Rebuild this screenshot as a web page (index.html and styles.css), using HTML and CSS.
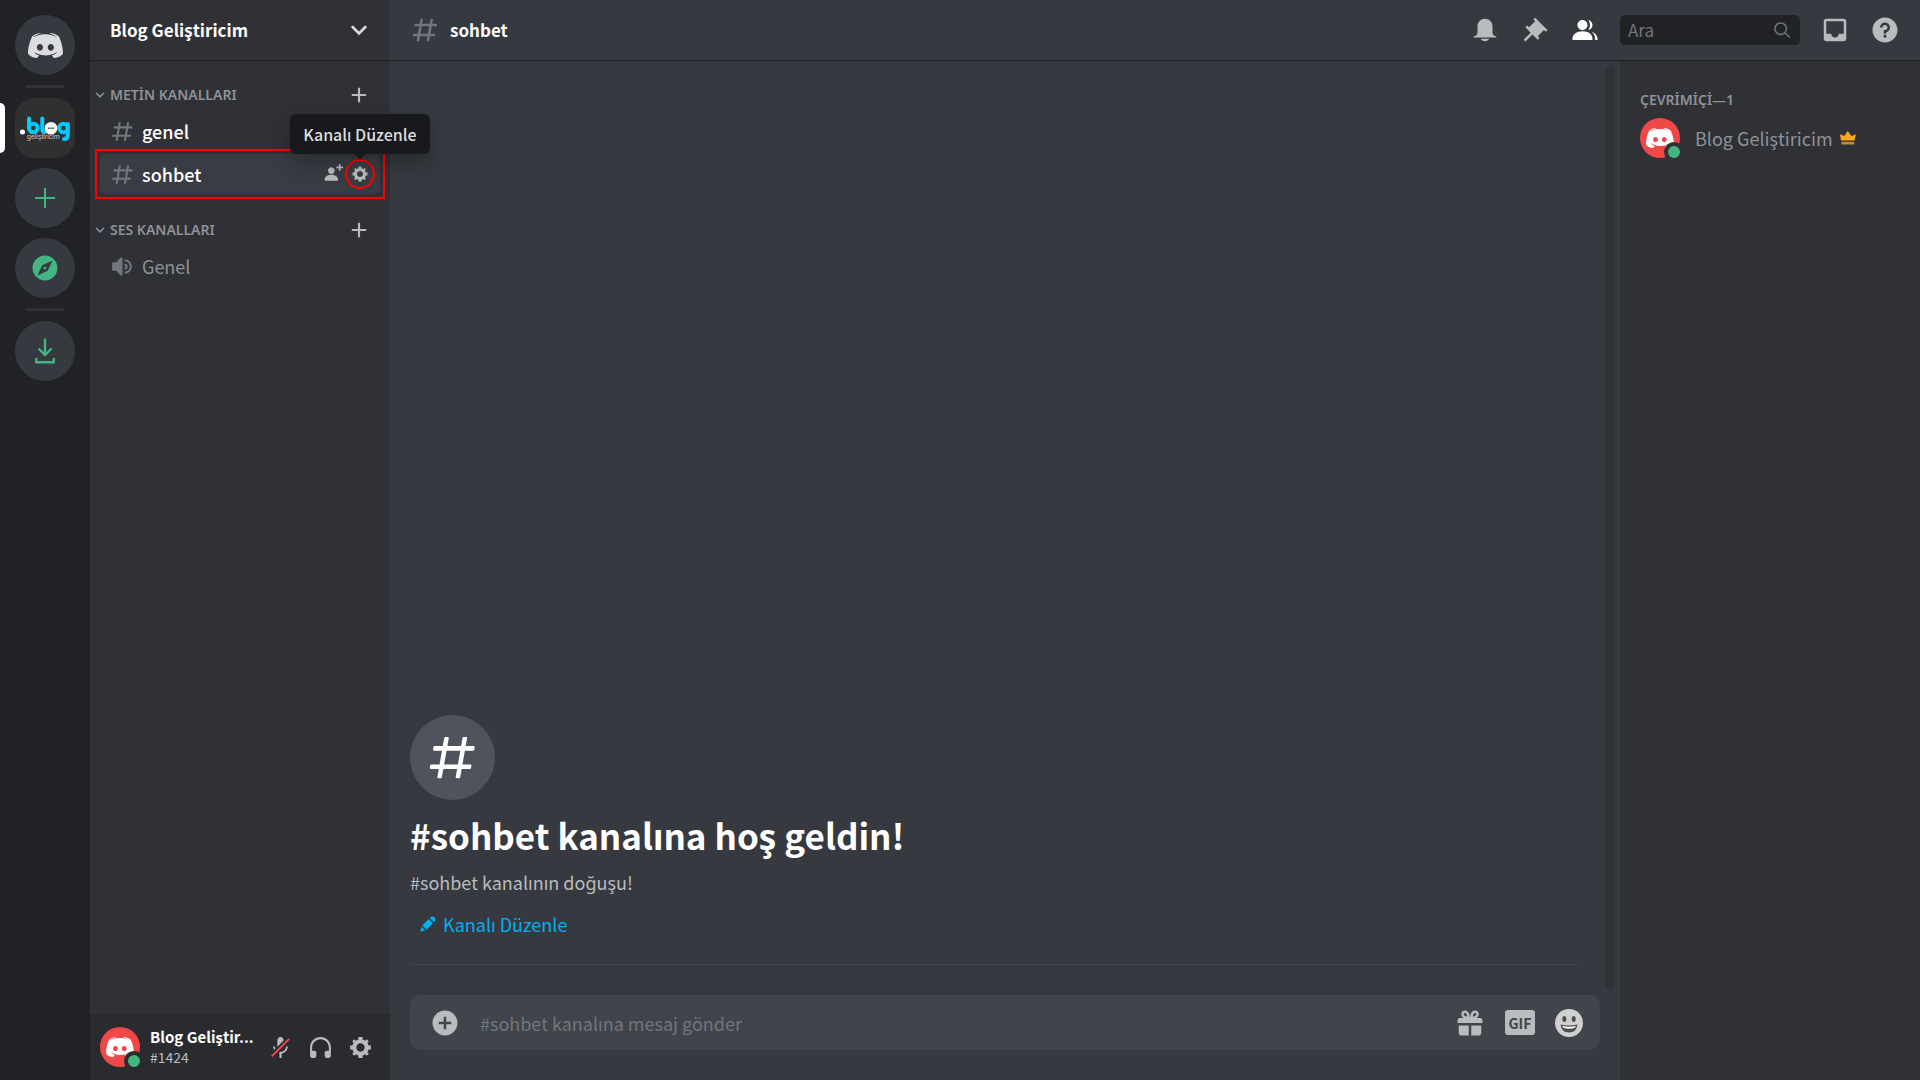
FILE: index.html
```html
<!DOCTYPE html>
<html lang="tr">
<head>
<meta charset="utf-8">
<meta name="viewport" content="width=device-width, initial-scale=1">
<title>sohbet</title>
<link rel="stylesheet" href="styles.css">
</head>
<body>
<svg class="sprite" aria-hidden="true">
  <symbol id="clyde" viewBox="0 0 28 20"><path fill-rule="evenodd" d="M20.6644 20C20.6644 20 19.8014 18.9762 19.0822 18.0714C22.2226 17.1905 23.4212 15.2381 23.4212 15.2381C22.4384 15.881 21.5034 16.3334 20.6644 16.6429C19.4658 17.1429 18.3151 17.4762 17.1884 17.6667C14.887 18.0953 12.7774 17.9762 10.9795 17.6429C9.613 17.381 8.4384 17 7.4555 16.6191C6.9041 16.4048 6.3048 16.1429 5.7055 15.8096C5.6336 15.7619 5.5616 15.7381 5.4897 15.6905C5.4418 15.6667 5.4178 15.6429 5.3938 15.6191C4.9623 15.381 4.7226 15.2143 4.7226 15.2143C4.7226 15.2143 5.8733 17.119 8.9178 18.0238C8.1986 18.9286 7.3116 20 7.3116 20C2.0137 19.8333 0 16.381 0 16.381C0 8.7144 3.4521 2.5002 3.4521 2.5002C6.9041 -.0712 10.1884 0 10.1884 0L10.4281 .2859C6.113 1.524 4.1233 3.405 4.1233 3.405C4.1233 3.405 4.6507 3.1193 5.5377 2.7145C8.1027 1.5955 10.1404 1.2859 10.9795 1.2145C11.1233 1.1907 11.2432 1.1669 11.387 1.1669C12.8493 .9764 14.5034 .9288 16.2295 1.1193C18.5068 1.3812 20.952 2.0479 23.4452 3.405C23.4452 3.405 21.5514 1.6193 17.476 .3812L17.8116 0C17.8116 0 21.0959 -.0712 24.5479 2.5002C24.5479 2.5002 28 8.7144 28 16.381C28 16.381 25.9623 19.8333 20.6644 20ZM9.5171 8.8812C8.1507 8.8812 7.0719 10.0717 7.0719 11.5241C7.0719 12.9765 8.1747 14.167 9.5171 14.167C10.8836 14.167 11.9623 12.9765 11.9623 11.5241C11.9863 10.0717 10.8836 8.8812 9.5171 8.8812ZM18.2671 8.8812C16.9007 8.8812 15.8219 10.0717 15.8219 11.5241C15.8219 12.9765 16.9247 14.167 18.2671 14.167C19.6336 14.167 20.7123 12.9765 20.7123 11.5241C20.7123 10.0717 19.6336 8.8812 18.2671 8.8812Z"/></symbol>
  <symbol id="gear" viewBox="0 0 24 24"><path fill-rule="evenodd" d="M19.738 10H22V14H19.739C19.498 14.931 19.1 15.798 18.565 16.564L20 18L18 20L16.565 18.564C15.797 19.099 14.932 19.498 14 19.738V22H10V19.738C9.069 19.498 8.203 19.099 7.436 18.564L6 20L4 18L5.436 16.564C4.901 15.799 4.502 14.932 4.262 14H2V10H4.262C4.502 9.068 4.9 8.202 5.436 7.436L4 6L6 4L7.436 5.436C8.202 4.9 9.068 4.502 10 4.262V2H14V4.261C14.932 4.502 15.797 4.9 16.565 5.435L18 3.999L20 5.999L18.564 7.436C19.099 8.202 19.498 9.069 19.738 10ZM12 16C14.2091 16 16 14.2091 16 12C16 9.79086 14.2091 8 12 8C9.79086 8 8 9.79086 8 12C8 14.2091 9.79086 16 12 16Z"/></symbol>
  <symbol id="hash" viewBox="0 0 24 24"><path fill-rule="evenodd" d="M5.88657 21C5.57547 21 5.3399 20.7189 5.39427 20.4126L6.00001 17H2.59511C2.28449 17 2.04905 16.7198 2.10259 16.4138L2.27759 15.4138C2.31946 15.1746 2.52722 15 2.77011 15H6.35001L7.41001 9H4.00511C3.69449 9 3.45905 8.71977 3.51259 8.41381L3.68759 7.41381C3.72946 7.17456 3.93722 7 4.18011 7H7.76001L8.39677 3.41262C8.43914 3.17391 8.64664 3 8.88907 3H9.87344C10.1845 3 10.4201 3.28107 10.3657 3.58738L9.76001 7H15.76L16.3968 3.41262C16.4391 3.17391 16.6466 3 16.8891 3H17.8734C18.1845 3 18.4201 3.28107 18.3657 3.58738L17.76 7H21.1649C21.4755 7 21.711 7.28023 21.6574 7.58619L21.4824 8.58619C21.4406 8.82544 21.2328 9 20.9899 9H17.41L16.35 15H19.7549C20.0655 15 20.301 15.2802 20.2474 15.5862L20.0724 16.5862C20.0306 16.8254 19.8228 17 19.5799 17H16L15.3632 20.5874C15.3209 20.8261 15.1134 21 14.8709 21H13.8866C13.5755 21 13.3399 20.7189 13.3943 20.4126L14 17H8.00001L7.36325 20.5874C7.32088 20.8261 7.11337 21 6.87094 21H5.88657ZM9.41045 9L8.35045 15H14.3504L15.4104 9H9.41045Z"/></symbol>
  <symbol id="chevron" viewBox="0 0 24 24"><path fill="none" stroke="currentColor" stroke-width="3.500" stroke-linecap="round" d="M3.500 8L12 16.500L20.500 8"/></symbol>
  <symbol id="plus" viewBox="0 0 20 20"><path d="M8.800 2H11.200V8.800H18V11.200H11.200V18H8.800V11.200H2V8.800H8.800Z"/></symbol>
</svg>

<div class="app">
  <nav class="guilds" aria-label="Sunucular">
    <button class="guild guild-home" aria-label="Ana Sayfa"><svg class="icon-clyde"><use href="#clyde"/></svg></button>
    <hr class="guild-rule">
    <button class="guild guild-active" aria-label="Blog Geliştiricim">
      <svg class="guild-logo" viewBox="0 0 60 60">
        <circle cx="7.500" cy="34" r="2.500" fill="#fff"/>
        <g fill="none" stroke="#06c8fb" stroke-width="4" stroke-linecap="round">
          <path d="M14 20.500V30"/><circle cx="18.300" cy="30" r="4.300"/>
          <path d="M27.300 20.500V31Q27.300 34.300 30 34.300"/>
          <circle cx="48.500" cy="30" r="4.300"/><path d="M52.800 26V37Q52.800 41 49 41"/>
        </g>
        <circle cx="36" cy="30.300" r="6.300" fill="#fff"/>
        <path d="M32.800 30.300H39.200" stroke="#555" stroke-width="1.500" stroke-dasharray="1.700 .6"/>
        <text class="guild-logo-text" x="12" y="41">geliştiricim</text>
      </svg>
    </button>
    <button class="guild guild-green" aria-label="Sunucu Ekle"><svg class="icon-24" viewBox="0 0 24 24"><path d="M11 2H13V11H22V13H13V22H11V13H2V11H11Z"/></svg></button>
    <button class="guild guild-green" aria-label="Keşfet"><svg class="icon-30" viewBox="0 0 24 24"><path fill-rule="evenodd" d="M12 10.9C11.39 10.9 10.9 11.39 10.9 12C10.9 12.61 11.39 13.1 12 13.1C12.61 13.1 13.1 12.61 13.1 12C13.1 11.39 12.61 10.9 12 10.9ZM12 2C6.48 2 2 6.48 2 12C2 17.52 6.48 22 12 22C17.52 22 22 17.52 22 12C22 6.48 17.52 2 12 2Z M14.19 14.19L6 18L9.81 9.81L18 6Z"/></svg></button>
    <hr class="guild-rule">
    <button class="guild guild-green" aria-label="İndir"><svg class="icon-30" viewBox="0 0 30 30"><g fill="none" stroke="currentColor" stroke-width="2.400"><path d="M15 2.500V19"/><path d="M8.500 12.500L15 19L21.500 12.500"/><path stroke-linejoin="round" d="M6.200 22V26.300H23.800V22"/></g></svg></button>
  </nav>

  <aside class="sidebar">
    <header class="bar sidebar-header">
      <h1 class="server-name">Blog Geliştiricim</h1>
      <button class="plain" aria-label="Sunucu menüsü"><svg class="icon-18"><use href="#chevron"/></svg></button>
    </header>
    <div class="channels">
      <section>
        <header class="category">
          <svg class="icon-chevron"><use href="#chevron"/></svg>
          <h2 class="label">METİN KANALLARI</h2>
          <button class="plain category-add" aria-label="Kanal oluştur"><svg class="icon-18"><use href="#plus"/></svg></button>
        </header>
        <ul class="channel-list">
          <li class="channel channel-unread"><svg class="icon-25"><use href="#hash"/></svg><a href="#genel">genel</a></li>
          <li class="channel channel-selected">
            <svg class="icon-25"><use href="#hash"/></svg><a href="#sohbet">sohbet</a>
            <button class="plain channel-action" aria-label="Davet oluştur"><svg class="icon-20" viewBox="0 0 24 24"><path d="M21 3H24V5H21V8H19V5H16V3H19V0H21V3ZM10 12C12.205 12 14 10.205 14 8C14 5.795 12.205 4 10 4C7.795 4 6 5.795 6 8C6 10.205 7.795 12 10 12ZM10 13C5.289 13 2 15.467 2 19V20H18V19C18 15.467 14.711 13 10 13Z"/></svg></button>
            <button class="plain channel-action channel-edit" aria-label="Kanalı Düzenle" aria-describedby="edit-tip"><svg class="icon-18"><use href="#gear"/></svg></button>
            <span class="tooltip" id="edit-tip" role="tooltip">Kanalı Düzenle</span>
          </li>
        </ul>
      </section>
      <section>
        <header class="category">
          <svg class="icon-chevron"><use href="#chevron"/></svg>
          <h2 class="label">SES KANALLARI</h2>
          <button class="plain category-add" aria-label="Kanal oluştur"><svg class="icon-18"><use href="#plus"/></svg></button>
        </header>
        <ul class="channel-list">
          <li class="channel"><svg class="icon-25" viewBox="0 0 24 24"><path d="M11.383 3.079C11.009 2.925 10.579 3.01 10.293 3.296L6 8.002H3C2.45 8.002 2 8.453 2 9.002V15.002C2 15.552 2.45 16.002 3 16.002H6L10.293 20.71C10.579 20.996 11.009 21.082 11.383 20.927C11.757 20.772 12 20.407 12 20.002V4.002C12 3.599 11.757 3.232 11.383 3.079ZM14 5.002V7.002C16.757 7.002 19 9.246 19 12.002C19 14.759 16.757 17.002 14 17.002V19.002C17.86 19.002 21 15.863 21 12.002C21 8.143 17.86 5.002 14 5.002ZM14 9.002C15.654 9.002 17 10.349 17 12.002C17 13.657 15.654 15.002 14 15.002V13.002C14.551 13.002 15 12.553 15 12.002C15 11.451 14.551 11.002 14 11.002V9.002Z"/></svg><a href="#genel-ses">Genel</a></li>
        </ul>
      </section>
    </div>
    <footer class="user-panel">
      <span class="avatar"><svg class="avatar-logo"><use href="#clyde"/></svg><span class="status"></span></span>
      <div class="user-text">
        <strong class="user-name">Blog Geliştir...</strong>
        <span class="user-tag">#1424</span>
      </div>
      <button class="plain user-button" aria-label="Mikrofonu aç"><svg class="icon-25" viewBox="0 0 24 24"><path d="M6.7 11H5C5 12.19 5.34 13.3 5.9 14.28L7.13 13.05C6.86 12.43 6.7 11.74 6.7 11ZM9.01 11.085C9.015 11.1125 9.02 11.14 9.02 11.17L15 5.18V5C15 3.34 13.66 2 12 2C10.34 2 9 3.34 9 5V11C9 11.03 9.005 11.0575 9.01 11.085ZM11.7237 16.0927L10.9632 16.8531L10.2533 17.5688C10.4978 17.633 10.747 17.6839 11 17.72V22H13V17.72C16.28 17.23 19 14.41 19 11H17.3C17.3 14 14.76 16.1 12 16.1C11.9076 16.1 11.8155 16.0975 11.7237 16.0927Z"/><path class="mic-slash" d="M21 4.27L19.73 3L3 19.73L4.27 21L8.46 16.82L9.69 15.58L11.35 13.92L14.99 10.28L21 4.27Z"/></svg></button>
      <button class="plain user-button" aria-label="Sağırlaştır"><svg class="icon-25" viewBox="0 0 24 24"><path d="M12 2.003C6.486 2.003 2 6.488 2 12.003V20.003C2 21.107 2.895 22.003 4 22.003H6C7.104 22.003 8 21.107 8 20.003V17.003C8 15.899 7.104 15.003 6 15.003H4V12.003C4 7.591 7.589 4.003 12 4.003C16.411 4.003 20 7.591 20 12.003V15.003H18C16.896 15.003 16 15.899 16 17.003V20.003C16 21.107 16.896 22.003 18 22.003H20C21.104 22.003 22 21.107 22 20.003V12.003C22 6.488 17.514 2.003 12 2.003Z"/></svg></button>
      <button class="plain user-button" aria-label="Kullanıcı Ayarları"><svg class="icon-25"><use href="#gear"/></svg></button>
    </footer>
  </aside>

  <div class="content">
    <header class="bar topbar">
      <svg class="icon-30 topbar-hash"><use href="#hash"/></svg>
      <h2 class="channel-title">sohbet</h2>
      <div class="toolbar">
        <button class="plain" aria-label="Bildirimler"><svg class="icon-30" viewBox="0 0 24 24"><path d="M18 9V14C18 15.657 19.344 17 21 17V18H3V17C4.656 17 6 15.657 6 14V9C6 5.686 8.686 3 12 3C15.314 3 18 5.686 18 9ZM12 21C10.524 21 9.248 20.19 8.555 19H15.445C14.752 20.19 13.476 21 12 21Z"/></svg></button>
        <button class="plain" aria-label="Sabitlenmiş mesajlar"><svg class="icon-30" viewBox="0 0 24 24"><path d="M22 12L12.101 2.101L10.686 3.514L12.101 4.929L7.151 9.878L5.736 8.465L4.322 9.88L8.565 14.122L2.908 19.778L4.322 21.192L9.979 15.536L14.222 19.778L15.636 18.364L14.222 16.95L19.171 12L20.586 13.414L22 12Z"/></svg></button>
        <button class="plain toolbar-on" aria-label="Üye listesi"><svg class="icon-30" viewBox="0 0 24 24"><path d="M14 8.006C14 10.211 12.206 12.006 10 12.006C7.795 12.006 6 10.211 6 8.006C6 5.801 7.794 4.006 10 4.006C12.206 4.006 14 5.801 14 8.006ZM2 19.006C2 15.473 5.29 13.006 10 13.006C14.711 13.006 18 15.473 18 19.006V20.006H2V19.006ZM20 20.006H22V19.006C22 16.443 20.27 14.441 17.521 13.535C19.062 14.913 20 16.806 20 19.006V20.006ZM14.883 11.908C16.666 11.504 18 9.908 18 8.006C18 5.969 16.469 4.282 14.497 4.037C15.432 5.095 16 6.485 16 8.006C16 9.449 15.489 10.774 14.638 11.81C14.72 11.842 14.802 11.874 14.883 11.908Z"/></svg></button>
        <label class="search">
          <input class="search-input" type="text" placeholder="Ara" aria-label="Ara">
          <svg class="icon-20" viewBox="0 0 20 20"><g fill="none" stroke="currentColor" stroke-width="1.500"><circle cx="8.700" cy="8.700" r="5.800"/><path d="M13 13L18 17.500"/></g></svg>
        </label>
        <button class="plain" aria-label="Gelen kutusu"><svg class="icon-30" viewBox="0 0 24 24"><path fill-rule="evenodd" d="M19 3H4.99C3.88 3 3.01 3.89 3.01 5L3 19C3 20.1 3.88 21 4.99 21H19C20.1 21 21 20.1 21 19V5C21 3.89 20.1 3 19 3ZM19 15H15C15 16.66 13.65 18 12 18C10.35 18 9 16.66 9 15H4.99V5H19V15Z"/></svg></button>
        <button class="plain" aria-label="Yardım"><svg class="icon-30" viewBox="0 0 24 24"><path fill-rule="evenodd" d="M12 2C6.486 2 2 6.487 2 12C2 17.515 6.486 22 12 22C17.514 22 22 17.515 22 12C22 6.487 17.514 2 12 2ZM12 18.25C11.31 18.25 10.75 17.691 10.75 17C10.75 16.31 11.31 15.75 12 15.75C12.69 15.75 13.25 16.31 13.25 17C13.25 17.691 12.69 18.25 12 18.25ZM13 13.875V15H11V12H12C13.104 12 14 11.103 14 10C14 8.896 13.104 8 12 8C10.896 8 10 8.896 10 10H8C8 7.795 9.795 6 12 6C14.205 6 16 7.795 16 10C16 11.861 14.723 13.429 13 13.875Z"/></svg></button>
      </div>
    </header>

    <div class="body">
      <main class="chat">
        <div class="messages">
          <div class="welcome">
            <span class="welcome-icon"><svg class="icon-55" viewBox="0 0 24 24"><use href="#hash"/></svg></span>
            <h2 class="welcome-title">#sohbet kanalına hoş geldin!</h2>
            <p class="welcome-text">#sohbet kanalının doğuşu!</p>
            <button class="plain edit-channel"><svg class="icon-20" viewBox="0 0 24 24"><path d="M19.293 9.83L19.941 9.183C21.353 7.771 21.353 5.472 19.941 4.059C18.529 2.647 16.229 2.647 14.817 4.059L14.17 4.707L19.293 9.83ZM12.896 5.977L5.185 13.691L10.309 18.813L18.02 11.099L12.896 5.977ZM4.119 20.97L8.759 19.811L4.187 15.239L3.027 19.88C2.95 20.186 3.04 20.511 3.263 20.734C3.487 20.957 3.812 21.046 4.119 20.97Z"/></svg>Kanalı Düzenle</button>
          </div>
          <div class="scrollbar"></div>
        </div>
        <form class="composer">
          <button class="plain" type="button" aria-label="Dosya yükle"><svg class="icon-30" viewBox="0 0 24 24"><path fill-rule="evenodd" d="M12 2C6.486 2 2 6.487 2 12C2 17.515 6.486 22 12 22C17.514 22 22 17.515 22 12C22 6.487 17.514 2 12 2ZM17 13H13V17H11V13H7V11H11V7H13V11H17V13Z"/></svg></button>
          <input class="composer-input" type="text" placeholder="#sohbet kanalına mesaj gönder" aria-label="#sohbet kanalına mesaj gönder">
          <button class="plain" type="button" aria-label="Hediye gönder"><svg class="icon-30" viewBox="0 0 24 24"><path fill-rule="evenodd" d="M16.886 7.999H20C21.104 7.999 22 8.896 22 9.999V11.999H2V9.999C2 8.896 2.897 7.999 4 7.999H7.114C6.663 7.764 6.236 7.477 5.879 7.121C4.709 5.951 4.709 4.048 5.879 2.879C7.012 1.746 8.986 1.746 10.121 2.877C11.758 4.514 11.979 7.595 11.998 7.941L11.99 8H12.01L12 7.941C12.021 7.595 12.242 4.514 13.879 2.877C15.014 1.746 16.986 1.746 18.121 2.877C19.29 4.049 19.29 5.952 18.121 7.121C17.764 7.477 17.337 7.764 16.886 7.999ZM7.293 5.707C6.903 5.316 6.903 4.682 7.293 4.292C7.481 4.103 7.732 4 8 4C8.268 4 8.519 4.103 8.707 4.292C9.297 4.882 9.641 5.94 9.825 6.822C8.945 6.639 7.879 6.293 7.293 5.707ZM14.174 6.824C14.359 5.941 14.702 4.883 15.293 4.293C15.481 4.103 15.732 4 16 4C16.268 4 16.519 4.103 16.706 4.291C17.096 4.682 17.097 5.316 16.707 5.707C16.116 6.298 15.057 6.642 14.174 6.824ZM3 13.999H11V22H5C3.896 22 3 21.104 3 20V13.999ZM13 13.999H21V20C21 21.104 20.104 22 19 22H13V13.999Z"/></svg></button>
          <button class="plain gif" type="button">GIF</button>
          <button class="plain" type="button" aria-label="Emoji seç"><svg class="icon-30" viewBox="0 0 30 30"><circle cx="14" cy="15" r="14" fill="#d0d0d0"/><g fill="#4d4d4d"><ellipse cx="9.300" cy="11" rx="2" ry="3"/><ellipse cx="18.700" cy="11" rx="2" ry="3"/><path d="M5.500 16.500Q14 18.500 22.500 16.500Q21.500 24.500 14 24.500Q6.500 24.500 5.500 16.500Z"/></g><path fill="#fff" d="M7 18Q14 19.500 21 18Q20.500 20.500 14 20.700Q7.500 20.500 7 18Z"/></svg></button>
        </form>
      </main>

      <aside class="members">
        <h2 class="label">ÇEVRİMİÇİ—1</h2>
        <div class="member">
          <span class="avatar"><svg class="avatar-logo"><use href="#clyde"/></svg><span class="status"></span></span>
          <span class="member-name">Blog Geliştiricim</span>
          <svg class="crown" viewBox="0 0 16 16"><path fill="#faa61a" d="M1 10.500L0 4.200L4.300 6L7.700 1L11.500 6L16 4.200L14.500 10.500Z"/><path fill="#c98b2b" d="M1.500 11.800H14.300V14.500H1.500Z"/></svg>
        </div>
      </aside>
    </div>
  </div>
</div>
</body>
</html>
```
FILE: styles.css
```css
*,
*::before,
*::after {
  box-sizing: border-box;
}

:root {
  --rail: #202225;
  --panel: #2f3136;
  --chat: #36393f;
  --icon: #b9bbbe;
  --muted: #8e9297;
  --dim: #72767d;
  --green: #43b581;
  --mark: #ff0000;
}

body {
  margin: 0;
  background: var(--chat);
  color: #fff;
  font-family: "Noto Sans CJK SC", "Noto Sans", sans-serif;
  font-size: 18px;
  line-height: 24px;
}

h1,
h2,
p,
ul {
  margin: 0;
  padding: 0;
  list-style: none;
}

a {
  color: inherit;
  text-decoration: none;
}

svg {
  display: block;
  flex: none;
  fill: currentColor;
}

.sprite {
  position: absolute;
  width: 0;
  height: 0;
}

.plain {
  display: flex;
  align-items: center;
  justify-content: center;
  padding: 0;
  border: 0;
  background: none;
  color: var(--icon);
  font: inherit;
  cursor: pointer;
}

.icon-18 { width: 18px; height: 18px; }
.icon-20 { width: 20px; height: 20px; }
.icon-24 { width: 24px; height: 24px; }
.icon-25 { width: 25px; height: 25px; }
.icon-30 { width: 30px; height: 30px; }
.icon-55 { width: 55px; height: 55px; }
.icon-clyde { width: 35px; height: 25px; }
.icon-chevron { width: 10px; height: 10px; }

.app {
  display: flex;
  min-height: 100vh;
}

/* Server rail */
.guilds {
  display: flex;
  flex: 0 0 90px;
  flex-direction: column;
  align-items: center;
  gap: 10px;
  padding-top: 15px;
  background: var(--rail);
}

.guild {
  position: relative;
  display: flex;
  align-items: center;
  justify-content: center;
  width: 60px;
  height: 60px;
  padding: 0;
  border: 0;
  border-radius: 50%;
  background: var(--chat);
  color: #dcddde;
}

.guild-green {
  color: var(--green);
}

.guild-active {
  border-radius: 20px;
  background: #303030;
}

.guild-active::before {
  content: "";
  position: absolute;
  left: -15px;
  top: 5px;
  width: 5px;
  height: 50px;
  border-radius: 0 5px 5px 0;
  background: #fff;
}

.guild-logo {
  width: 60px;
  height: 60px;
}

.guild-logo-text {
  fill: #c8c8c8;
  font-size: 7px;
}

.guild-rule {
  width: 40px;
  height: 3px;
  margin: 0;
  border: 0;
  border-radius: 2px;
  background: var(--panel);
}

/* Channel sidebar */
.sidebar {
  position: relative;
  z-index: 1;
  display: flex;
  flex: 0 0 300px;
  flex-direction: column;
  min-width: 0;
  background: var(--panel);
}

.bar {
  display: flex;
  align-items: center;
  height: 60px;
  box-shadow: 0 1px 0 rgba(4, 4, 5, .25), 0 2px 0 rgba(6, 6, 7, .1);
}

.sidebar-header {
  justify-content: space-between;
  padding: 0 22px 0 20px;
}

.sidebar-header .plain {
  color: #dcddde;
}

.server-name,
.channel-title {
  font-size: 17px;
  font-weight: 700;
  line-height: 24px;
}

.channels {
  flex: 1;
}

.category {
  display: flex;
  align-items: center;
  gap: 5px;
  height: 30px;
  margin-top: 20px;
  padding: 0 22px 0 5px;
  color: var(--muted);
}

.label {
  color: var(--muted);
  font-family: "Noto Sans", "Open Sans", sans-serif;
  font-size: 14px;
  font-weight: 600;
  line-height: 20px;
}

.category-add {
  margin-left: auto;
}

.channel-list {
  display: flex;
  flex-direction: column;
  gap: 3px;
  padding: 1px 10px;
}

.channel {
  position: relative;
  display: flex;
  align-items: center;
  gap: 7px;
  height: 40px;
  padding: 0 10px;
  border-radius: 5px;
  color: var(--muted);
}

.channel > svg {
  color: var(--dim);
}

.channel a {
  flex: 1;
}

.channel-unread a,
.channel-selected a {
  color: #fff;
  font-weight: 500;
}

.channel-selected {
  background: #393c43;
}

.channel-selected::before {
  content: "";
  position: absolute;
  inset: -5px;
  border: 2px solid var(--mark);
  pointer-events: none;
}

.channel-action {
  position: relative;
  width: 20px;
}

.channel-edit::after {
  content: "";
  position: absolute;
  inset: -6px -5px;
  border: 2px solid var(--mark);
  border-radius: 50%;
}

.tooltip {
  position: absolute;
  right: -50px;
  bottom: 40px;
  width: 140px;
  padding: 8px 0;
  border-radius: 6px;
  background: #18191c;
  box-shadow: 0 10px 20px rgba(0, 0, 0, .24);
  color: #dcddde;
  font-size: 16px;
  font-weight: 500;
  line-height: 24px;
  text-align: center;
}

.tooltip::after {
  content: "";
  position: absolute;
  left: 50%;
  top: 100%;
  margin-left: -6px;
  border: 6px solid transparent;
  border-top-color: #18191c;
}

.user-panel {
  display: flex;
  align-items: center;
  height: 66px;
  padding: 0 10px;
  background: #292b2f;
}

.user-text {
  display: flex;
  flex: 1;
  flex-direction: column;
  min-width: 0;
  padding-left: 10px;
  white-space: nowrap;
}

.user-name {
  font-size: 15px;
  font-weight: 700;
  line-height: 20px;
}

.user-tag {
  color: var(--icon);
  font-size: 14px;
  line-height: 20px;
}

.user-button {
  width: 40px;
  height: 40px;
}

.mic-slash {
  fill: #f04747;
}

.avatar {
  position: relative;
  display: flex;
  flex: none;
  align-items: center;
  justify-content: center;
  width: 40px;
  height: 40px;
  border-radius: 50%;
  background: #f04747;
  color: #fff;
}

.avatar-logo {
  width: 28px;
  height: 20px;
}

.status {
  position: absolute;
  right: -4px;
  bottom: -4px;
  width: 20px;
  height: 20px;
  border: 4px solid var(--panel);
  border-radius: 50%;
  background: var(--green);
}

.user-panel .status {
  border-color: #292b2f;
}

/* Top bar */
.content {
  display: flex;
  flex: 1;
  flex-direction: column;
  min-width: 0;
}

.topbar {
  position: relative;
  padding: 0 20px;
}

.topbar-hash {
  margin-right: 10px;
  color: var(--dim);
}

.toolbar {
  display: flex;
  align-items: center;
  gap: 20px;
  margin-left: auto;
}

.toolbar-on {
  color: #fff;
}

.search {
  display: flex;
  align-items: center;
  width: 180px;
  height: 30px;
  padding: 0 8px;
  border-radius: 5px;
  background: var(--rail);
  color: var(--dim);
}

.search-input,
.composer-input {
  flex: 1;
  min-width: 0;
  padding: 0;
  border: 0;
  outline: 0;
  background: none;
  color: #dcddde;
  font: inherit;
}

.search-input {
  font-size: 17px;
}

.search-input::placeholder,
.composer-input::placeholder {
  color: var(--dim);
  opacity: 1;
}

/* Chat */
.body {
  display: flex;
  flex: 1;
}

.chat {
  display: flex;
  flex: 1;
  flex-direction: column;
  min-width: 0;
  padding-bottom: 30px;
}

.messages {
  display: flex;
  flex: 1;
  align-items: flex-end;
  gap: 25px;
  padding: 5px 5px 5px 20px;
}

.welcome {
  flex: 1;
  margin-bottom: 25px;
  padding-bottom: 20px;
  border-bottom: 1px solid #42454a;
}

.welcome-icon {
  display: flex;
  align-items: center;
  justify-content: center;
  width: 85px;
  height: 85px;
  border-radius: 50%;
  background: #4f545c;
}

.welcome-title {
  margin-top: 10px;
  font-size: 35px;
  font-weight: 700;
  line-height: 50px;
}

.welcome-text {
  margin-top: 10px;
  color: var(--icon);
  line-height: 24px;
}

.edit-channel {
  gap: 5px;
  height: 40px;
  margin-top: 10px;
  padding: 0 8px;
  color: #00aff4;
}

.scrollbar {
  align-self: stretch;
  width: 10px;
  border-radius: 5px;
  background: #2e3338;
}

.composer {
  display: flex;
  align-items: center;
  gap: 20px;
  height: 55px;
  margin: 0 20px;
  padding: 0 15px 0 20px;
  border-radius: 10px;
  background: #40444b;
}

.gif {
  width: 30px;
  height: 25px;
  border-radius: 3px;
  background: var(--icon);
  color: #40444b;
  font-size: 14px;
  font-weight: 700;
  line-height: 24px;
}

/* Members */
.members {
  flex: 0 0 300px;
  padding: 30px 20px;
  background: var(--panel);
}

.member {
  display: flex;
  align-items: center;
  height: 40px;
  margin-top: 8px;
  color: var(--muted);
}

.member-name {
  margin: 0 7px 0 15px;
}

.crown {
  width: 16px;
  height: 16px;
}
```
